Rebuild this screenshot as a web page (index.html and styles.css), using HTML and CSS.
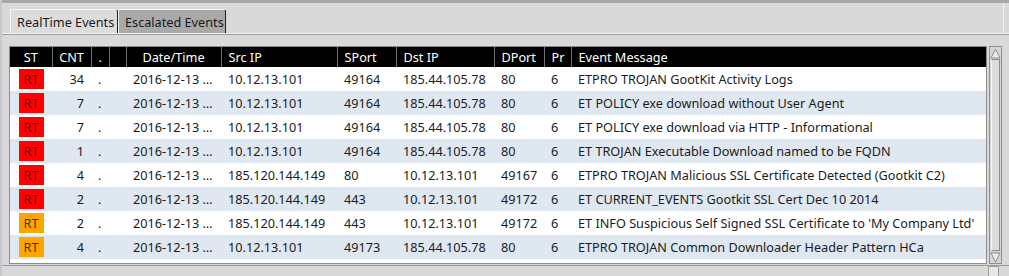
FILE: index.html
```html
<!DOCTYPE html>
<html lang="en">

<head>
    <meta charset="UTF-8">
    <title>Events</title>
    <link rel="stylesheet" href="styles.css">
</head>

<body>
    <div class="titlebar"></div>
    <div class="tabbar">
        <div class="tab active">RealTime Events</div>
        <div class="tab">Escalated Events</div>
    </div>
    <div class="panel">
        <div class="view">
            <div class="grid-frame">
                <table class="grid">
                    <colgroup>
                        <col style="width: 42px">
                        <col style="width: 39px">
                        <col style="width: 18px">
                        <col style="width: 17px">
                        <col style="width: 95px">
                        <col style="width: 116px">
                        <col style="width: 59px">
                        <col style="width: 98px">
                        <col style="width: 50px">
                        <col style="width: 27px">
                        <col style="width: 415px">
                    </colgroup>
                    <thead>
                        <tr>
                            <th class="c">ST</th>
                            <th class="c">CNT</th>
                            <th>.</th>
                            <th></th>
                            <th class="c">Date/Time</th>
                            <th>Src IP</th>
                            <th>SPort</th>
                            <th>Dst IP</th>
                            <th>DPort</th>
                            <th>Pr</th>
                            <th>Event Message</th>
                        </tr>
                    </thead>
                    <tbody>
                        <tr>
                            <td class="c"><span class="badge red">RT</span></td>
                            <td class="r">34</td><td>.</td><td></td>
                            <td>2016-12-13 …</td><td>10.12.13.101</td><td>49164</td>
                            <td>185.44.105.78</td><td>80</td><td>6</td>
                            <td>ETPRO TROJAN GootKit Activity Logs</td>
                        </tr>
                        <tr>
                            <td class="c"><span class="badge red">RT</span></td>
                            <td class="r">7</td><td>.</td><td></td>
                            <td>2016-12-13 …</td><td>10.12.13.101</td><td>49164</td>
                            <td>185.44.105.78</td><td>80</td><td>6</td>
                            <td>ET POLICY exe download without User Agent</td>
                        </tr>
                        <tr>
                            <td class="c"><span class="badge red">RT</span></td>
                            <td class="r">7</td><td>.</td><td></td>
                            <td>2016-12-13 …</td><td>10.12.13.101</td><td>49164</td>
                            <td>185.44.105.78</td><td>80</td><td>6</td>
                            <td>ET POLICY exe download via HTTP - Informational</td>
                        </tr>
                        <tr>
                            <td class="c"><span class="badge red">RT</span></td>
                            <td class="r">1</td><td>.</td><td></td>
                            <td>2016-12-13 …</td><td>10.12.13.101</td><td>49164</td>
                            <td>185.44.105.78</td><td>80</td><td>6</td>
                            <td>ET TROJAN Executable Download named to be FQDN</td>
                        </tr>
                        <tr>
                            <td class="c"><span class="badge red">RT</span></td>
                            <td class="r">4</td><td>.</td><td></td>
                            <td>2016-12-13 …</td><td>185.120.144.149</td><td>80</td>
                            <td>10.12.13.101</td><td>49167</td><td>6</td>
                            <td>ETPRO TROJAN Malicious SSL Certificate Detected (Gootkit C2)</td>
                        </tr>
                        <tr>
                            <td class="c"><span class="badge red">RT</span></td>
                            <td class="r">2</td><td>.</td><td></td>
                            <td>2016-12-13 …</td><td>185.120.144.149</td><td>443</td>
                            <td>10.12.13.101</td><td>49172</td><td>6</td>
                            <td>ET CURRENT_EVENTS Gootkit SSL Cert Dec 10 2014</td>
                        </tr>
                        <tr>
                            <td class="c"><span class="badge orange">RT</span></td>
                            <td class="r">2</td><td>.</td><td></td>
                            <td>2016-12-13 …</td><td>185.120.144.149</td><td>443</td>
                            <td>10.12.13.101</td><td>49172</td><td>6</td>
                            <td>ET INFO Suspicious Self Signed SSL Certificate to 'My Company Ltd'</td>
                        </tr>
                        <tr>
                            <td class="c"><span class="badge orange">RT</span></td>
                            <td class="r">4</td><td>.</td><td></td>
                            <td>2016-12-13 …</td><td>10.12.13.101</td><td>49173</td>
                            <td>185.44.105.78</td><td>80</td><td>6</td>
                            <td>ETPRO TROJAN Common Downloader Header Pattern HCa</td>
                        </tr>
                    </tbody>
                </table>
            </div>
            <div class="vscroll">
                <div class="arrow">
                    <svg width="11" height="11" viewBox="0 0 11 11">
                        <polygon points="5.5,1 10,10 1,10" fill="#ececec" stroke="#8a8a8a" stroke-width="1" />
                    </svg>
                </div>
                <div class="thumb"></div>
                <div class="arrow">
                    <svg width="11" height="11" viewBox="0 0 11 11">
                        <polygon points="1,1 10,1 5.5,10" fill="#ececec" stroke="#8a8a8a" stroke-width="1" />
                    </svg>
                </div>
            </div>
        </div>
        <div class="footer">
            <div class="grip"></div>
        </div>
    </div>
</body>

</html>
```
FILE: styles.css
```css
body {
    margin: 0;
    background-color: #d9d9d9;
    font-family: 'Noto Sans', 'Open Sans', sans-serif;
    font-size: 12.7px;
    color: #1c1c1c;
    border-left: 2px solid #c3cad3;
    height: 276px;
    box-sizing: border-box;
    overflow: hidden;
}

.titlebar {
    height: 3px;
    background-color: #a8a8a8;
    margin-left: -2px;
}

/* tabs */
.tabbar {
    height: 30px;
    display: flex;
    align-items: flex-end;
    padding-left: 8px;
    border-right: 1px solid #f2f2f2;
    margin-right: 5px;
}

.tab {
    height: 23px;
    line-height: 24px;
    width: 95px;
    padding: 0 5px 0 6px;
    white-space: nowrap;
    border-top: 1px solid #f4f4f4;
    border-left: 1px solid #f4f4f4;
    border-right: 1px solid #1e1e1e;
    border-top-right-radius: 3px;
    background-color: #a9a9a9;
    color: #1a1a1a;
}

.tab.active {
    background-color: #dcdcdc;
}

.panel {
    border-top: 1px solid #f4f4f4;
}

.panel::before {
    content: "";
    display: block;
    height: 1px;
    background-color: #9c9c9c;
}

.view {
    display: flex;
    gap: 2px;
    padding: 11px 0 0 7px;
}

.grid-frame {
    border: 1px solid #8c8c8c;
    background-color: #fff;
    padding-bottom: 2px;
}

.grid {
    border-collapse: collapse;
    table-layout: fixed;
    width: 976px;
}

.grid th {
    background-color: #000;
    color: #fff;
    font-weight: normal;
    height: 20px;
    padding: 0 0 0 7px;
    text-align: left;
    border-left: 1px solid #707070;
    white-space: nowrap;
    overflow: hidden;
}

.grid th:first-child {
    border-left: none;
}

.grid td {
    height: 24px;
    padding: 0 0 0 7px;
    white-space: nowrap;
    overflow: hidden;
}

.grid tbody tr:nth-child(even) {
    background-color: #dfe7f0;
}

.grid .c {
    text-align: center;
    padding: 0;
}

.grid .r {
    text-align: right;
    padding: 0 7px 0 0;
}

.badge {
    display: inline-block;
    width: 25px;
    height: 20px;
    line-height: 20px;
    text-align: center;
    color: rgba(0, 0, 0, 0.72);
    vertical-align: middle;
}

.badge.red {
    background-color: #ff0000;
}

.badge.orange {
    background-color: #ffa500;
}

/* scrollbar */
.vscroll {
    width: 11px;
    height: 216px;
    border: 1px solid #8f8f8f;
    background-color: #d6d6d6;
    display: flex;
    flex-direction: column;
}

.arrow {
    height: 12px;
    display: flex;
    justify-content: center;
    align-items: center;
}

.thumb {
    flex: 1;
    margin: 0 1px;
    border-top: 1px solid #8f8f8f;
    border-bottom: 1px solid #8f8f8f;
    border-left: 1px solid #f6f6f6;
    border-right: 1px solid #8f8f8f;
    background-color: #dcdcdc;
}

.footer {
    margin-top: 1px;
    height: 13px;
    border-top: 1px solid #9c9c9c;
    display: flex;
    justify-content: flex-end;
    padding-right: 10px;
}

.grip {
    width: 9px;
    height: 10px;
    background-color: #e8e8e8;
    border: 1px solid #9c9c9c;
}
```
